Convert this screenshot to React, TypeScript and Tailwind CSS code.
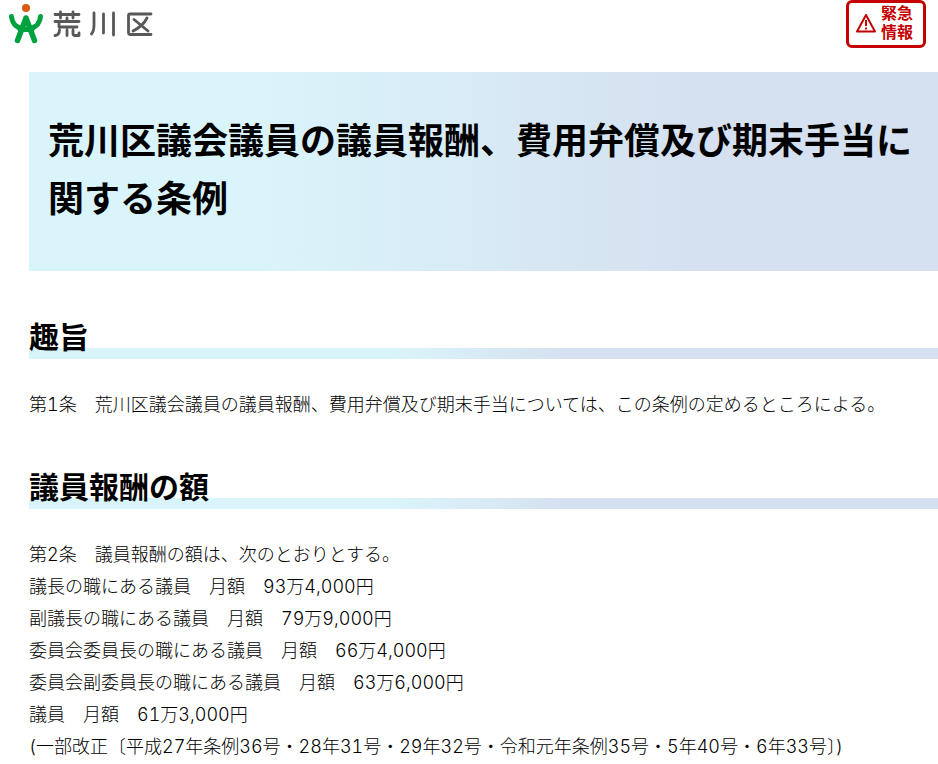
import React from 'react';

interface HeadingProps {
  children: React.ReactNode;
}

const salaries = [
  '議長の職にある議員　月額　93万4,000円',
  '副議長の職にある議員　月額　79万9,000円',
  '委員会委員長の職にある議員　月額　66万4,000円',
  '委員会副委員長の職にある議員　月額　63万6,000円',
  '議員　月額　61万3,000円',
];

const Logo: React.FC = () => (
  <a href="#" aria-label="荒川区" className="block">
    <svg viewBox="0 0 146 42" fill="none" className="w-[146px] h-[42px]">
      {/* Figure mark */}
      <circle cx="18" cy="4" r="4" fill="#dc5a0f" />
      <g stroke="#00a23f" strokeLinecap="round" strokeLinejoin="round">
        <path d="M3.500 12.500C4 18 7 23 13 24M32.500 12.500C32 18 29 23 23 24" strokeWidth="5" />
        <path d="M18 14L9.500 36.500M18 14L26.500 36.500" strokeWidth="5.500" />
        <path d="M12 25.500H24" strokeWidth="5" />
      </g>
      {/* Wordmark strokes */}
      <g stroke="#595757" strokeWidth="2.800" strokeLinecap="round" strokeLinejoin="round">
        <path d="M47 10.500H71M52.500 8V14M65 8V14M47 17.500H71M59 14V17M51 18V23H69M51.500 26C51.500 29 50.500 31 47 31.500M59 26V31.500M65 26V29.500Q65 31.500 67 31.500H71V29" />
        <path d="M86 9V21Q86 27 83.500 30M95.500 10V29M105.500 9V31" />
        <path d="M143 10H122Q120.500 10 120.500 11.500V28.500Q120.500 30.500 122.500 30.500H143M139 14Q135 22 125 27M126 15.500L140 27" />
      </g>
    </svg>
  </a>
);

const SectionHeading: React.FC<HeadingProps> = ({ children }) => (
  <h2 className="bg-[linear-gradient(90deg,#daf4fb_40%,#d5e0f0_60%)] bg-[length:100%_11px] bg-bottom bg-no-repeat pb-1 text-[30px] leading-[36px] font-bold">
    {children}
  </h2>
);

export default function App() {
  return (
    <div className="min-h-screen overflow-hidden bg-white font-['Inter','Noto_Sans_CJK_JP',sans-serif] text-black" lang="ja">
      <header className="flex h-12 items-start justify-between pr-3 pl-2">
        <div className="pt-1">
          <Logo />
        </div>
        <button
          type="button"
          className="flex h-12 w-20 items-center justify-center gap-1 rounded-md border-3 border-[#c40000] pr-1 pb-0.5 text-base leading-[19px] font-bold text-[#c40000]"
        >
          <svg viewBox="0 0 22 20" fill="none" stroke="currentColor" strokeWidth="2" strokeLinejoin="round" className="h-5 w-[22px]">
            <path d="M11 2L20 18.500H2Z" />
            <path d="M11 7V13M11 14.500V16.500" />
          </svg>
          <span>
            緊急
            <br />
            情報
          </span>
        </button>
      </header>

      <main className="pt-6 pl-[29px]">
        <h1 className="bg-[linear-gradient(90deg,#daf4fb_25%,#d5e0f0_75%)] px-[19px] pt-10 pb-[43px] text-4xl leading-[58px] font-bold">
          荒川区議会議員の議員報酬、費用弁償及び期末手当に関する条例
        </h1>

        <section className="pt-12">
          <SectionHeading>趣旨</SectionHeading>
          <p className="pt-[30px] text-lg leading-8 font-light tabular-nums">
            第1条　荒川区議会議員の議員報酬、費用弁償及び期末手当については、この条例の定めるところによる。
          </p>
        </section>

        <section className="pt-12">
          <SectionHeading>議員報酬の額</SectionHeading>
          <div className="pt-[30px] text-lg leading-8 font-light tabular-nums">
            <p>第2条　議員報酬の額は、次のとおりとする。</p>
            {salaries.map((line) => (
              <p key={line}>{line}</p>
            ))}
            <p>
              (一部改正〔平成27年条例36号・28年31号・29年32号・令和元年条例35号・5年40号・6年33号〕)
            </p>
          </div>
        </section>
      </main>
    </div>
  );
}
